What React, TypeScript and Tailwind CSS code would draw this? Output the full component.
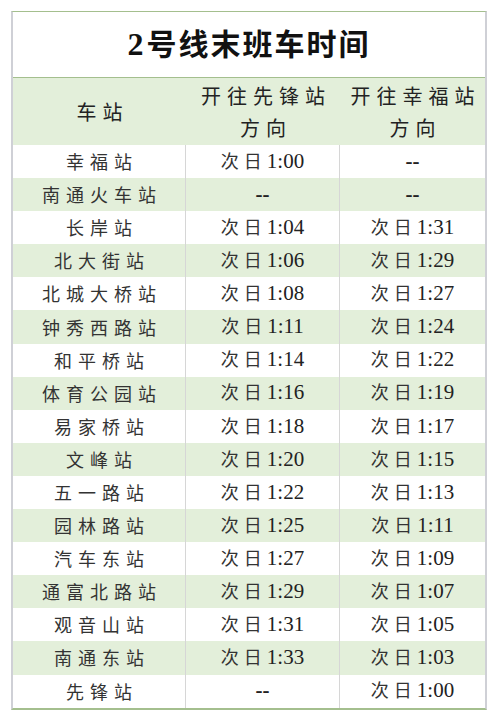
import React from "react";

const rows: [string, string, string][] = [
  ["幸福站", "1:00", "--"],
  ["南通火车站", "--", "--"],
  ["长岸站", "1:04", "1:31"],
  ["北大街站", "1:06", "1:29"],
  ["北城大桥站", "1:08", "1:27"],
  ["钟秀西路站", "1:11", "1:24"],
  ["和平桥站", "1:14", "1:22"],
  ["体育公园站", "1:16", "1:19"],
  ["易家桥站", "1:18", "1:17"],
  ["文峰站", "1:20", "1:15"],
  ["五一路站", "1:22", "1:13"],
  ["园林路站", "1:25", "1:11"],
  ["汽车东站", "1:27", "1:09"],
  ["通富北路站", "1:29", "1:07"],
  ["观音山站", "1:31", "1:05"],
  ["南通东站", "1:33", "1:03"],
  ["先锋站", "--", "1:00"],
];

const cjk = "font-['Noto_Sans_CJK_SC',sans-serif]";
const serif = "font-['Liberation_Serif','Times_New_Roman',serif]";

function Time({ v }: { v: string }) {
  if (v === "--") {
    return <span className={`${serif} text-[21px] font-bold text-[#222]`}>--</span>;
  }
  return (
    <span className="flex items-baseline">
      <span className={`${cjk} text-[18px] tracking-[5px] text-[#333]`}>次日</span>
      <span className={`${serif} text-[21px] text-[#222]`}>{v}</span>
    </span>
  );
}

export default function App() {
  return (
    <div className="w-[499px] h-[721px] bg-white pt-[11px] pl-[11px]">
      <div className="w-[476px] border-l-2 border-r-2 border-l-[#cfd0d6] border-r-[#cfd0d6] border-t border-t-[#a4bf8e] border-b-2 border-b-[#a4bf8e]">
        <div className="h-[66px] flex items-center justify-center border-b border-b-[#a4bf8e] bg-white pb-[1px]">
          <span className="flex items-baseline text-[#111]">
            <span className={`${serif} text-[32px] font-bold mr-[3px]`}>2</span>
            <span className={`${cjk} text-[30px] font-bold tracking-[2px]`}>号线末班车时间</span>
          </span>
        </div>
        <div className="grid grid-cols-[173px_154px_145px] h-[67px] bg-[#e3efda] text-[#222]">
          <div className={`${cjk} text-[20px] flex items-center justify-center`}>
            <span className="tracking-[6px] pl-[6px]">车站</span>
          </div>
          <div className={`${cjk} text-[20px] leading-[32px] flex flex-col items-center justify-center pt-[1px]`}>
            <span className="tracking-[6px] pl-[6px]">开往先锋站</span>
            <span className="tracking-[6px] pl-[6px]">方向</span>
          </div>
          <div className={`${cjk} text-[20px] leading-[32px] flex flex-col items-center justify-center pt-[1px]`}>
            <span className="tracking-[6px] pl-[6px]">开往幸福站</span>
            <span className="tracking-[6px] pl-[6px]">方向</span>
          </div>
        </div>
        {rows.map((r, i) => (
          <div
            key={i}
            className={`grid grid-cols-[173px_154px_145px] h-[33.1px] ${i % 2 === 0 ? "bg-white" : "bg-[#e3efda]"}`}
          >
            <div className="flex items-center justify-center border-r border-r-[#d6d6d6]">
              <span className={`${cjk} text-[18px] tracking-[6px] pl-[6px] text-[#333]`}>{r[0]}</span>
            </div>
            <div className="flex items-center justify-center border-r border-r-[#d6d6d6]">
              <Time v={r[1]} />
            </div>
            <div className="flex items-center justify-center">
              <Time v={r[2]} />
            </div>
          </div>
        ))}
      </div>
    </div>
  );
}
